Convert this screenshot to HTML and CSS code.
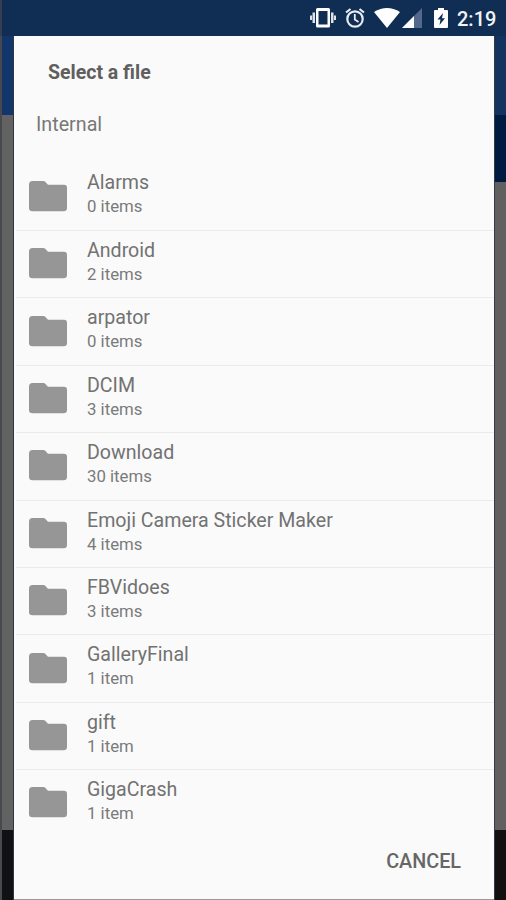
FILE: index.html
```html
<!DOCTYPE html>
<html lang="en">
<head>
<meta charset="utf-8">
<title>Select a file</title>
<link rel="stylesheet" href="styles.css">
</head>
<body>
<svg width="0" height="0" class="defs" aria-hidden="true">
  <symbol id="folder" viewBox="0 0 38 31"><path d="M3.500 0H14.500Q15.500 0 16.200 .8L19 3.800H35Q38 3.800 38 7V27Q38 30.300 34.500 30.300H3.500Q0 30.300 0 27V3.500Q0 0 3.500 0Z"/></symbol>
</svg>
<div class="screen">
  <header class="status">
    <svg class="vibrate" viewBox="0 0 26 20" width="26" height="20"><path fill="#fff" fill-rule="evenodd" d="M7.500 0H18.500Q20 0 20 1.500V18Q20 19.500 18.500 19.500H7.500Q6 19.500 6 18V1.500Q6 0 7.500 0ZM8.500 3V16.500H17.500V3Z"/><path fill="#dde2ea" d="M2.500 4.500H5V15H2.500ZM21 4.500H23.500V15H21ZM0 7.500H2V12H0ZM24 7.500H26V12H24Z"/></svg>
    <svg class="alarm" viewBox="0 0 20 20" width="20" height="20" fill="none" stroke="#e8ebf0"><circle cx="10" cy="11" r="7.700" stroke-width="2.200"/><path stroke-width="2.200" d="M1 4.500 5.500 1M19 4.500 14.500 1"/><path stroke-width="1.800" d="M9.800 6V11.500L13.500 14"/></svg>
    <svg class="wifi" viewBox="0 0 26 20" width="26" height="20"><path fill="#fff" d="M0 4Q13-4 26 4L13 20Z"/></svg>
    <svg class="signal" viewBox="0 0 20 20" width="20" height="20"><path fill="#52698b" d="M20 0V20H0Z"/><path fill="#fff" d="M12 8V20H0Z"/></svg>
    <svg class="battery" viewBox="0 0 14 20" width="14" height="20"><path fill="#fff" d="M4 0H10V2H13Q14 2 14 3V19Q14 20 13 20H1Q0 20 0 19V3Q0 2 1 2H4Z"/><path fill="#102d54" d="M9 5 3.500 11.500H6.500L5.500 17 11 10.300H8Z"/></svg>
    <span class="clock">2:19</span>
  </header>
  <main class="stage">
    <div class="side left"></div>
    <section class="dialog">
      <h1>Select a file</h1>
      <p class="place">Internal</p>
      <ul class="files">
        <li><svg><use href="#folder"/></svg><div><b>Alarms</b><span>0 items</span></div></li>
        <li><svg><use href="#folder"/></svg><div><b>Android</b><span>2 items</span></div></li>
        <li><svg><use href="#folder"/></svg><div><b>arpator</b><span>0 items</span></div></li>
        <li><svg><use href="#folder"/></svg><div><b>DCIM</b><span>3 items</span></div></li>
        <li><svg><use href="#folder"/></svg><div><b>Download</b><span>30 items</span></div></li>
        <li><svg><use href="#folder"/></svg><div><b>Emoji Camera Sticker Maker</b><span>4 items</span></div></li>
        <li><svg><use href="#folder"/></svg><div><b>FBVidoes</b><span>3 items</span></div></li>
        <li><svg><use href="#folder"/></svg><div><b>GalleryFinal</b><span>1 item</span></div></li>
        <li><svg><use href="#folder"/></svg><div><b>gift</b><span>1 item</span></div></li>
        <li><svg><use href="#folder"/></svg><div><b>GigaCrash</b><span>1 item</span></div></li>
      </ul>
      <footer><button type="button">CANCEL</button></footer>
    </section>
    <div class="side right"></div>
  </main>
</div>
</body>
</html>
```
FILE: styles.css
```css
* { box-sizing: border-box; }
body { margin: 0; font-family: Roboto, sans-serif; }
.defs { position: absolute; }
.screen { width: 506px; height: 900px; overflow: hidden; display: flex; flex-direction: column; background: #102d54; }
.status { height: 36px; flex: none; display: flex; align-items: flex-start; padding: 8px 0 0 308px; border-left: 2px solid #344052; background: #102d54; }
.status svg { flex: none; }
.alarm { margin-left: 9px; }
.wifi { margin-left: 9px; }
.signal { margin-left: 2px; }
.battery { margin-left: 12px; }
.clock { margin-left: 9px; margin-top: -1px; color: #f2f4f7; font-size: 20px; line-height: 24px; font-weight: 500; }
.stage { flex: 1; display: flex; min-height: 0; }
.side { flex: none; }
.left { width: 14px; background: linear-gradient(#12366b 0 79px, #626262 79px 794px, #101112 794px); border-left: 2px solid #47494c; border-right: 1px solid #303743; }
.right { width: 12px; background: linear-gradient(#12335f 0 79px, #001b42 79px 146px, #606060 146px 794px, #101010 794px); border-left: 1px solid #343a44; }
.dialog { width: 480px; flex: none; display: flex; flex-direction: column; background: #fafafa; border-bottom: 1px solid #999; }
h1 { margin: 24px 0 0 34px; font-size: 19.5px; line-height: 26px; font-weight: 700; color: #5f5f5f; }
.place { margin: 26px 0 0 22px; font-size: 19.7px; line-height: 26px; color: #777; }
.files { list-style: none; margin: 25.4px 0 0 2px; padding: 0; }
.files li { height: 67.43px; display: flex; border-bottom: 1px solid #ebebeb; }
.files li:last-child { border-bottom: 0; }
.files svg { width: 38px; height: 31px; margin: 17.300px 20px 0 13px; fill: #969696; }
.files div { padding-top: 7px; }
.files b, .files span { display: block; white-space: nowrap; font-weight: 400; }
.files b { font-size: 19.6px; line-height: 25px; color: #727272; }
.files span { font-size: 16.8px; line-height: 23px; color: #7a7a7a; }
footer { display: flex; justify-content: flex-end; padding: 11px 33px 0 0; }
button { border: 0; padding: 0; background: none; font: 500 19.8px/26px Roboto, sans-serif; color: #666; }
```
